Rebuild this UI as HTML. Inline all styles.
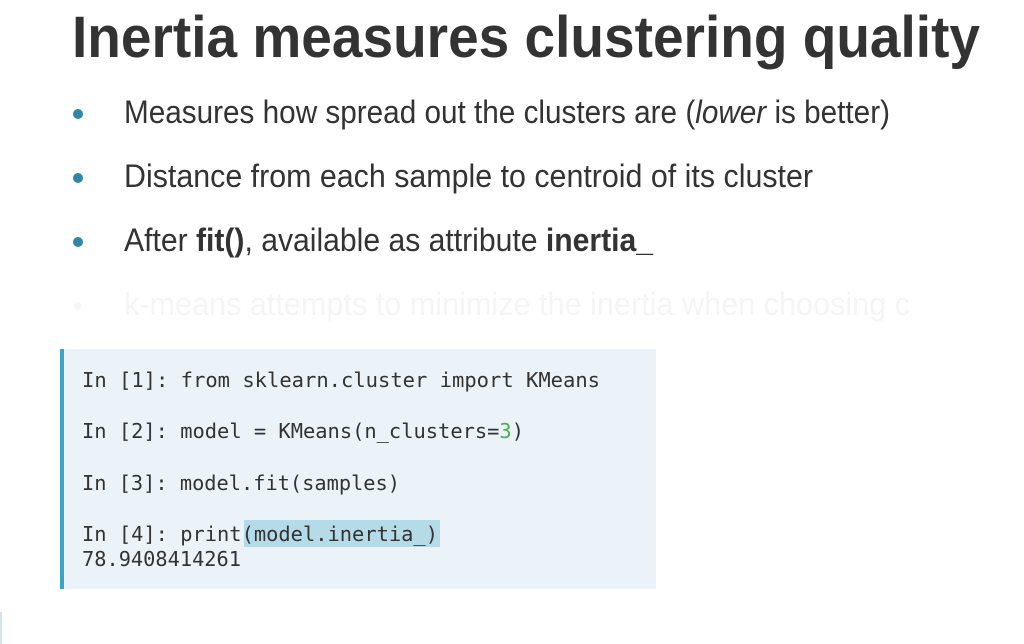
<!DOCTYPE html>
<html><head><meta charset="utf-8"><style>
html,body{margin:0;padding:0;background:#fff;width:1024px;height:644px;overflow:hidden}
svg{display:block}
</style></head><body>
<svg width="1024" height="644" xmlns="http://www.w3.org/2000/svg">
<rect width="1024" height="644" fill="#fff"/>
<text x="72" y="57" font-family="Liberation Sans, sans-serif" font-weight="bold" font-size="58" fill="#333" textLength="908" lengthAdjust="spacingAndGlyphs">Inertia measures clustering quality</text>
<g fill="#2e86a8"><circle cx="78" cy="114" r="5"/><circle cx="78" cy="178" r="5"/><circle cx="78" cy="242" r="5"/></g>
<g font-family="Liberation Sans, sans-serif" font-size="32" fill="#333">
<text x="124" y="123" textLength="766" lengthAdjust="spacingAndGlyphs">Measures how spread out the clusters are (<tspan font-style="italic">lower</tspan> is better)</text>
<text x="124" y="187" textLength="689" lengthAdjust="spacingAndGlyphs">Distance from each sample to centroid of its cluster</text>
<text x="124" y="251" textLength="529" lengthAdjust="spacingAndGlyphs">After <tspan font-weight="bold">fit()</tspan>, available as attribute <tspan font-weight="bold">inertia_</tspan></text>
<text x="124" y="315" fill="#f5f5f5" textLength="786" lengthAdjust="spacingAndGlyphs">k-means attempts to minimize the inertia when choosing c</text>
</g>
<circle cx="78" cy="306" r="4" fill="#f6f6f6"/>
<rect x="60" y="349" width="596" height="240" fill="#ebf3f8"/>
<rect x="60" y="349" width="4" height="240" fill="#3aa3c8"/>
<rect x="244" y="520" width="196" height="27" fill="#b5dbe8"/>
<g font-family="DejaVu Sans Mono, Liberation Mono, monospace" font-size="20" fill="#333">
<text x="82" y="387" textLength="518" lengthAdjust="spacingAndGlyphs">In [1]: from sklearn.cluster import KMeans</text>
<text x="82" y="438" textLength="442" lengthAdjust="spacingAndGlyphs">In [2]: model = KMeans(n_clusters=<tspan fill="#4caf50">3</tspan>)</text>
<text x="82" y="490" textLength="318" lengthAdjust="spacingAndGlyphs">In [3]: model.fit(samples)</text>
<text x="82" y="541" textLength="356" lengthAdjust="spacingAndGlyphs">In [4]: print(model.inertia_)</text>
<text x="82" y="566" textLength="159" lengthAdjust="spacingAndGlyphs">78.9408414261</text>
</g>
<rect x="0" y="612" width="2" height="32" fill="#cfe6f0"/>
</svg>
</body></html>
